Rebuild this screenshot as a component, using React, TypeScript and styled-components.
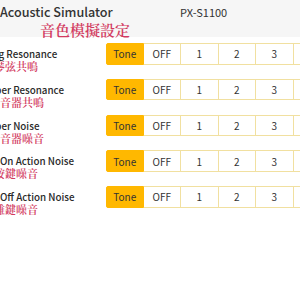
import React from 'react';
import styled, { createGlobalStyle } from 'styled-components';

const Global = createGlobalStyle`
  html, body { margin: 0; padding: 0; overflow: hidden; background: #ffffff; }
  body { font-family: "Noto Sans CJK TC", "Noto Sans", sans-serif; color: #333333; }
`;

const Page = styled.div`
  width: 300px;
  height: 300px;
  overflow: hidden;
  background: #ffffff;
`;

const Header = styled.header`
  height: 37px;
  background: #f6f6f6;
  display: flex;
  flex-direction: column;
`;

const TitleRow = styled.div`
  display: grid;
  grid-template-columns: 180px auto;
  align-items: center;
  height: 21px;
  padding-top: 2px;
`;

const AppTitle = styled.div`
  font-size: 12.6px;
  font-weight: 500;
  color: #333333;
  white-space: nowrap;
`;

const Model = styled.div`
  font-size: 11px;
  font-weight: 400;
  color: #333333;
`;

const ZhTitle = styled.div`
  padding-left: 40px;
  padding-top: 1px;
  font-family: "Noto Serif CJK TC", "Noto Sans CJK TC", serif;
  font-size: 15px;
  font-weight: 600;
  line-height: 15px;
  color: #d23a60;
  white-space: nowrap;
`;

const List = styled.div`
  padding-top: 6px;
  display: flex;
  flex-direction: column;
`;

const Row = styled.div`
  height: 35.75px;
  display: flex;
  align-items: flex-start;
  white-space: nowrap;
`;

const Label = styled.div`
  width: 106px;
  flex: none;
  padding-top: 5px;
`;

const LabelEn = styled.div<{ $shift: number }>`
  margin-left: ${p => p.$shift}px;
  font-size: 9.8px;
  font-weight: 500;
  line-height: 12px;
  color: #2a2a2a;
`;

const LabelZh = styled.div<{ $shift: number }>`
  margin-left: ${p => p.$shift}px;
  font-family: "Noto Serif CJK TC", "Noto Sans CJK TC", serif;
  font-size: 11px;
  font-weight: 600;
  line-height: 12px;
  color: #d23a60;
`;

const Segments = styled.div`
  display: flex;
  flex: none;
`;

const Cell = styled.div<{ $active?: boolean; $first?: boolean }>`
  box-sizing: border-box;
  width: 37.5px;
  height: 21.5px;
  display: flex;
  align-items: center;
  justify-content: center;
  font-size: 10px;
  color: #333333;
  background: ${p => (p.$active ? '#ffb800' : '#ffffff')};
  border: 1px solid ${p => (p.$active ? '#ffb800' : '#f1e0a0')};
  border-left: ${p => (p.$first ? undefined : 'none')};
  border-radius: ${p => (p.$first ? '2px 0 0 2px' : '0')};
`;

const rows = [
  { en: 'String Resonance', enShift: -24, zh: '琴弦共鳴', zhShift: -6 },
  { en: 'Damper Resonance', enShift: -26.5, zh: '制音器共鳴', zhShift: -11 },
  { en: 'Damper Noise', enShift: -26.5, zh: '制音器噪音', zhShift: -11 },
  { en: 'Key On Action Noise', enShift: -19.5, zh: '按鍵噪音', zhShift: -6 },
  { en: 'Key Off Action Noise', enShift: -19.5, zh: '離鍵噪音', zhShift: -6 },
];

const options = ['Tone', 'OFF', '1', '2', '3', '4'];

export default function App() {
  return (
    <Page>
      <Global />
      <Header>
        <TitleRow>
          <AppTitle>Acoustic Simulator</AppTitle>
          <Model>PX-S1100</Model>
        </TitleRow>
        <ZhTitle>音色模擬設定</ZhTitle>
      </Header>
      <List>
        {rows.map(r => (
          <Row key={r.en}>
            <Label>
              <LabelEn $shift={r.enShift}>{r.en}</LabelEn>
              <LabelZh $shift={r.zhShift}>{r.zh}</LabelZh>
            </Label>
            <Segments>
              {options.map((o, i) => (
                <Cell key={o} $active={i === 0} $first={i === 0}>
                  {o}
                </Cell>
              ))}
            </Segments>
          </Row>
        ))}
      </List>
    </Page>
  );
}
